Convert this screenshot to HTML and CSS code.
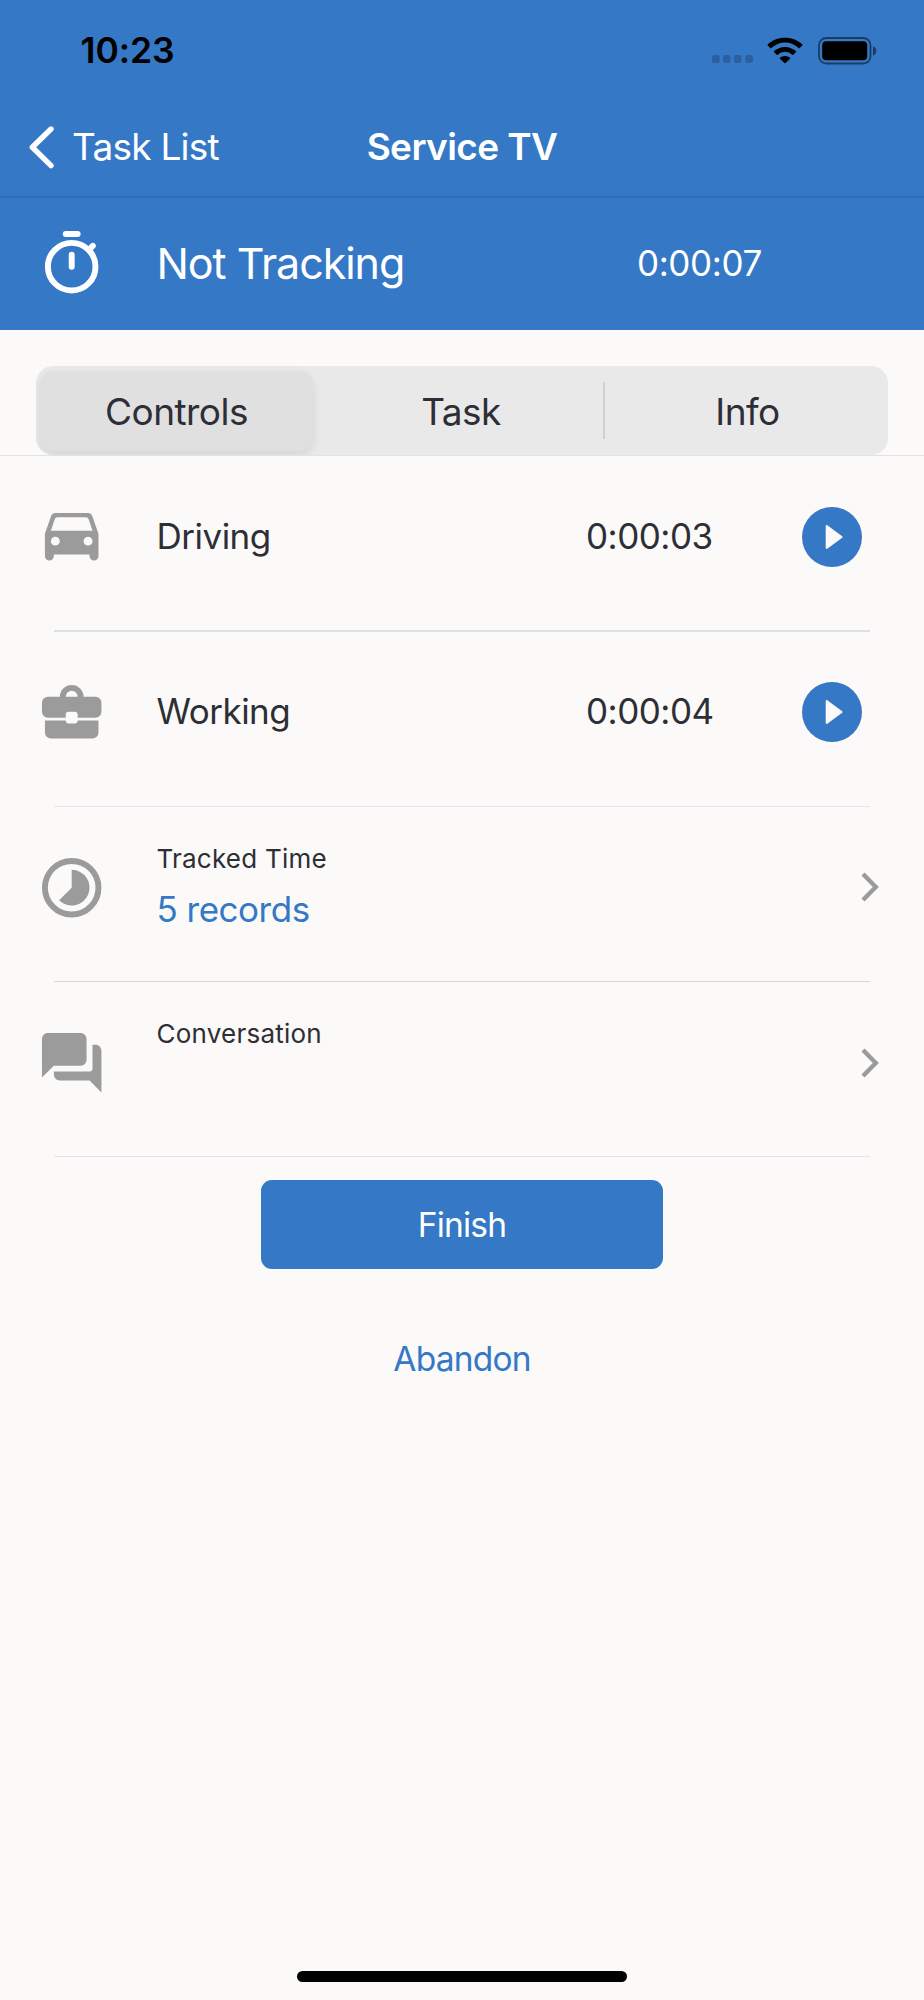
FILE: index.html
```html
<!DOCTYPE html>
<html lang="en">
<head>
<meta charset="utf-8">
<title>Service TV</title>
<link rel="stylesheet" href="styles.css">
</head>
<body>
<main class="screen">
  <header class="header">
    <div class="status">
      <span class="clock">10:23</span>
      <div class="status-icons">
        <svg class="signal" viewBox="0 0 42 8"><rect x="0" width="7.6" height="8" rx="2.2"/><rect x="11" width="7.6" height="8" rx="2.2"/><rect x="22" width="7.6" height="8" rx="2.2"/><rect x="33.3" width="7.6" height="8" rx="2.2"/></svg>
        <svg class="wifi" viewBox="0 0 36 27"><path d="M18 0.7C25 .7 31 3.3 35.3 7.5q.5.5 0 1L32.6 11.1q-.5.4-1 0A19.5 19.5 0 0 0 4.4 11.1q-.5.4-1 0L.7 8.500q-.5-.5 0-1C5 3.300 11 .7 18 .7z"/><path d="M18 9.900c4.300 0 8.100 1.600 11 4.200q.5.500 0 1l-2.700 2.600q-.5.500-1 0a10.800 10.800 0 0 0-14.600 0q-.5.500-1 0L7 15.100q-.5-.5 0-1c2.900-2.600 6.700-4.200 11-4.200z"/><path d="M18 19c2 0 3.700.7 5 1.800q.5.500 0 1l-4.400 4.300q-.6.500-1.200 0L13 21.800q-.5-.5 0-1c1.300-1.100 3-1.800 5-1.800z"/></svg>
        <svg class="battery" viewBox="0 0 59 28"><rect x="1" y="1" width="51.500" height="25.500" rx="7.300" fill="none" stroke="#000" stroke-opacity=".5" stroke-width="1.800"/><rect x="4.200" y="4.300" width="45" height="19" rx="4"/><path d="M55 9.300c2 .7 3.300 2.400 3.300 4.600S57 17.800 55 18.500z" opacity=".5"/></svg>
      </div>
    </div>
    <nav class="nav">
      <a class="back"><svg class="back-icon" viewBox="0 0 25 43"><path d="M22 3 3.300 21.300 22 39.600" fill="none" stroke="#fff" stroke-width="5.400" stroke-linecap="round" stroke-linejoin="round"/></svg><span class="back-text">Task List</span></a>
      <h1 class="title">Service TV</h1>
    </nav>
    <section class="tracking">
      <svg class="icon" viewBox="0 0 24 24" fill="none" stroke="#fff" stroke-width="2" stroke-linecap="round"><circle cx="12" cy="13" r="8"/><path d="M10 2h4M12 9v4M18 7.100l1.100-1.100"/></svg>
      <span class="tracking-label">Not Tracking</span>
      <span class="tracking-time">0:00:07</span>
    </section>
  </header>

  <div class="tabs-wrap">
    <div class="tabs">
      <div class="tab tab-active">Controls</div>
      <div class="tab tab-middle">Task</div>
      <div class="tab tab-divided">Info</div>
    </div>
  </div>

  <section class="list">
    <div class="row row-soft">
      <svg class="icon gray" viewBox="0 0 24 24"><path fill-rule="evenodd" d="M18.920 5.010C18.720 4.420 18.160 4 17.500 4h-11c-.66 0-1.210.42-1.420 1.010L3 11v7.500a1.500 1.500 0 0 0 3 0V18h12v.500a1.500 1.500 0 0 0 3 0V11zM6.500 15a1.500 1.500 0 1 1 0-3 1.500 1.500 0 0 1 0 3zm11 0a1.500 1.500 0 1 1 0-3 1.500 1.500 0 0 1 0 3zM5 10l1.270-3.820q.250-.680 1-.680h9.460q.750 0 1 .680L19 10z"/></svg>
      <span class="label">Driving</span>
      <span class="time">0:00:03</span>
      <svg class="play" viewBox="0 0 60 60"><circle cx="30" cy="30" r="30"/><path d="M24.700 19 39.600 30 24.700 41z"/></svg>
    </div>
    <div class="row">
      <svg class="icon gray" viewBox="0 0 24 24"><path fill-rule="evenodd" d="M8 7a4 4 0 0 1 8 0h4a2 2 0 0 1 2 2v3a2 2 0 0 1-2 2h-6v-1a1 1 0 0 0-1-1h-2a1 1 0 0 0-1 1v1H4a2 2 0 0 1-2-2V9a2 2 0 0 1 2-2zM10 7h4a2 2 0 0 0-4 0zM3 15h7a1 1 0 0 0 1 1h2a1 1 0 0 0 1-1h7v4a2 2 0 0 1-2 2H5a2 2 0 0 1-2-2z"/></svg>
      <span class="label">Working</span>
      <span class="time">0:00:04</span>
      <svg class="play" viewBox="0 0 60 60"><circle cx="30" cy="30" r="30"/><path d="M24.700 19 39.600 30 24.700 41z"/></svg>
    </div>
    <div class="row row-link row-strong">
      <svg class="icon gray" viewBox="0 0 24 24"><circle cx="12" cy="12" r="9" fill="none" stroke="#9b9b9b" stroke-width="2"/><path d="M12 12V6a6 6 0 1 1-4.240 10.240z"/></svg>
      <div class="detail"><span class="caption">Tracked Time</span><span class="records">5 records</span></div>
      <svg class="chevron" viewBox="0 0 18 30"><path d="M2 2 14.800 15 2 28" fill="none" stroke="#9b9b9b" stroke-width="4.400"/></svg>
    </div>
    <div class="row row-link">
      <svg class="icon gray" viewBox="0 0 24 24"><path d="M17 11V4c0-1.100-.9-2-2-2H4c-1.100 0-2 .9-2 2v13l4-4h9c1.100 0 2-.9 2-2zM20 6h-1v8c0 .550-.450 1-1 1H6v1c0 1.100.9 2 2 2h10l4 4V8c0-1.100-.9-2-2-2z"/></svg>
      <div class="detail"><span class="caption">Conversation</span></div>
      <svg class="chevron" viewBox="0 0 18 30"><path d="M2 2 14.800 15 2 28" fill="none" stroke="#9b9b9b" stroke-width="4.400"/></svg>
    </div>
  </section>

  <div class="actions">
    <button class="finish">Finish</button>
    <button class="abandon">Abandon</button>
  </div>
  <div class="home"></div>
</main>
</body>
</html>
```
FILE: styles.css
```css
* { box-sizing: border-box; }
body { margin: 0; background: #fbfaf8; font-family: Inter, "Liberation Sans", sans-serif; color: #2d2e36; }
.screen { width: 924px; height: 2000px; display: flex; flex-direction: column; background: #fbfaf8; white-space: nowrap; }
.header { height: 330px; background: #3478c6; color: #fff; display: flex; flex-direction: column; }
.status { height: 101px; padding: 0 47.500px 0 80.500px; display: flex; justify-content: space-between; align-items: center; color: #000; }
.clock { font-size: 35.5px; font-weight: 600; letter-spacing: -0.1px; }
.status-icons { display: flex; align-items: center; }
.signal { width: 42px; height: 8px; margin: 17px 13px 0 0; fill: #2b5f9e; }
.wifi { width: 36px; height: 27px; margin-right: 14.500px; }
.battery { width: 59px; height: 28px; }
.nav { height: 97px; padding: 0 28px 3px; border-bottom: 2px solid #2f6cb4; display: grid; grid-template-columns: 1fr auto 1fr; align-items: center; font-size: 37px; line-height: 90px; }
.back { display: flex; align-items: center; }
.back-icon { width: 25px; height: 43px; margin: 0 18px 0 1px; }
.back-text { letter-spacing: -0.75px; }
.title { margin: 0; font-size: 37px; font-weight: 600; letter-spacing: -0.6px; }
.tracking { flex: 1; display: grid; grid-template-columns: 120.500px 480.500px 1fr; align-items: center; padding: 0 0 1px 36px; }
.icon { width: 71.400px; height: 71.400px; display: block; }
.gray { fill: #9b9b9b; }
.tracking-label { font-size: 43px; letter-spacing: -1.050px; padding-bottom: 2px; }
.tracking-time { font-size: 35px; letter-spacing: -0.4px; padding-bottom: 2px; }
.tabs-wrap { height: 126px; padding: 36px 36px 0; border-bottom: 1px solid #e0e4e9; }
.tabs { height: 89px; padding: 5px 4px 4px; border-radius: 17px; background: #e9e9e9; display: grid; grid-template-columns: 273px 290px 1fr; overflow: hidden; font-size: 37px; letter-spacing: -0.55px; }
.tab { display: flex; align-items: center; justify-content: center; }
.tab-active { background: #e0e0e0; border-radius: 14px; box-shadow: 0 4px 10px rgba(0, 0, 0, 0.09); }
.tab-middle { padding-left: 6px; }
.tab-divided { padding-left: 8px; background: linear-gradient(#d1d1d1, #d1d1d1) 0 11px / 2px 57px no-repeat; }
.row { height: 175.300px; padding: 0 48px 14px 36px; display: grid; grid-template-columns: 120.500px 429.500px 1fr 60px; align-items: center; background: linear-gradient(#e2e6ec, #e2e6ec) 54px 100% / 816px 1px no-repeat; }
.row-soft { height: 176px; padding-bottom: 14.700px; background: linear-gradient(#dbe1e8, #dbe1e8) 54px 100% / 816px 2px no-repeat; }
.row-soft + .row { height: 174.600px; padding-bottom: 15px; }
.row-strong { background-image: linear-gradient(#d3d8dd, #d3d8dd); }
.label, .time, .records { font-size: 35px; letter-spacing: -0.5px; }
.label, .time { padding-bottom: 1px; }
.play { width: 60px; height: 60px; margin-left: -14px; }
.play circle { fill: #3478c6; }
.play path { fill: #fbfaf8; stroke: #fbfaf8; stroke-width: 2; stroke-linejoin: round; }
.row-link { grid-template-columns: 120.500px 1fr 18px; padding-right: 45px; }
.detail { height: 100%; padding-top: 35px; display: flex; flex-direction: column; }
.caption { font-size: 26px; line-height: 34px; letter-spacing: 0.220px; }
.records { color: #3478c6; line-height: 44px; margin-top: 11.500px; }
.chevron { width: 18px; height: 30px; }
.actions { display: flex; flex-direction: column; align-items: center; padding-top: 22.500px; }
button { border: 0; padding: 1px 0 0; font: 33.500px Inter, "Liberation Sans", sans-serif; letter-spacing: -0.800px; }
.finish { width: 402px; height: 89px; border-radius: 11px; background: #3478c6; color: #fff; }
.abandon { margin-top: 45px; width: 402px; height: 89px; background: none; color: #3478c6; }
.home { width: 330px; height: 11px; border-radius: 6px; background: #000; margin: auto auto 18px; }
```
